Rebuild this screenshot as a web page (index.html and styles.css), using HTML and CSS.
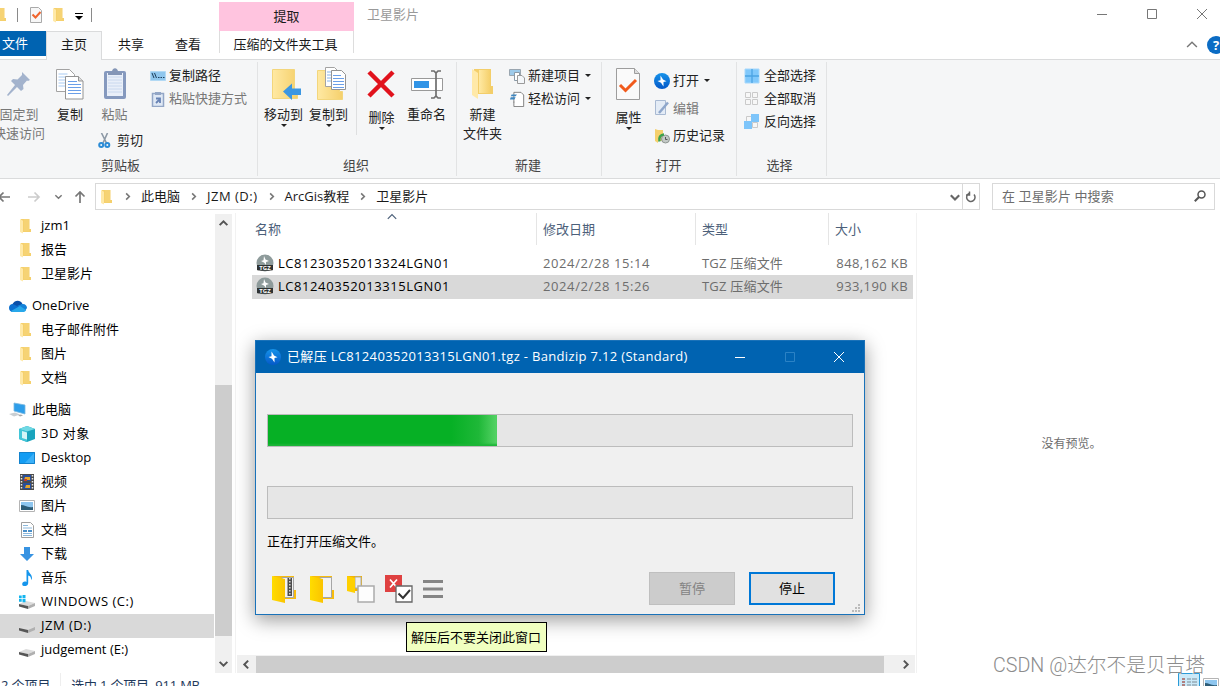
FILE: index.html
```html
<!DOCTYPE html>
<html lang="zh-CN">
<head>
    <meta charset="UTF-8">
    <title>卫星影片</title>
    <link rel="stylesheet" href="styles.css">
</head>
<body>
    <!-- 图标 -->
    <svg class="icon-defs" width="0" height="0">
        <defs>
            <linearGradient id="g-folder" x1="0" x2="1"><stop offset="0" stop-color="#ffe9a3"/><stop offset="1" stop-color="#f5d06c"/></linearGradient>
            <linearGradient id="g-blue" x1="0" y1="0" x2="0" y2="1"><stop offset="0" stop-color="#1693ea"/><stop offset="1" stop-color="#0458c8"/></linearGradient>
            <linearGradient id="g-yellow" x1="0" x2="1"><stop offset="0" stop-color="#ffdc00"/><stop offset="1" stop-color="#fbc400"/></linearGradient>
        </defs>
        <symbol id="i-folder" viewBox="0 0 16 16">
            <path d="M2 1h8.500v10H12v3H2z" fill="#f5d06c"/>
            <path d="M1 1l3 1.800V15.500L1 14z" fill="#ffe9a8"/>
            <path d="M5 1h5v12H5z" fill="#f6d374"/>
        </symbol>
        <symbol id="i-check" viewBox="0 0 16 16">
            <path d="M2.500.500h8l3 3v12h-11z" fill="#f7f7f7" stroke="#a9a9a9"/>
            <path d="M4.500 7.500l3 3 5-5.500" fill="none" stroke="#f0642c" stroke-width="2"/>
        </symbol>
        <symbol id="i-pin" viewBox="0 0 24 24">
            <path d="M15 0l8 8-2 1-1-.5-4 4.500.5 4-2.500 2-4-4L1 24l-1-1 8-10-4-4 2-2 4.500.5L15 3z" fill="#a3b3cd"/>
        </symbol>
        <symbol id="i-copy" viewBox="0 0 28 32">
            <path d="M.5 1.500h13l5 5v17H.5z" fill="#fff" stroke="#a3a3a3"/>
            <path d="M2.500 6h9M2.500 9h12M2.500 12h12M2.500 15h12M2.500 18h12" stroke="#a9cbf2"/>
            <path d="M9.500 8.500h13l4.500 4.500v18H9.500z" fill="#fff" stroke="#939393"/>
            <path d="M22.500 8.500V13H27" fill="#ddd" stroke="#939393"/>
            <path d="M12 13.500h9M12 16.500h13M12 19.500h13M12 22.500h13M12 25.500h13" stroke="#6b9fe8"/>
        </symbol>
        <symbol id="i-paste" viewBox="0 0 24 32">
            <rect x="1" y="3" width="22" height="28" rx="2" fill="#8599be"/>
            <path d="M4 5h16v23H4z" fill="#e9eff9"/>
            <path d="M5 9h14M5 12h14M5 15h14M5 18h14M5 21h14M5 24h14" stroke="#c9d8ee"/>
            <path d="M5 7V4h4c0-5 6-5 6 0h4v3z" fill="#8496b7"/>
        </symbol>
        <symbol id="i-path" viewBox="0 0 16 16">
            <path d="M.5 3.500h15v9H.5z" fill="#8fc6ed" stroke="#b2d9f4"/>
            <path d="M2 5l2 5M4.500 5l2 5M8 9.500h1.500M10.500 9.500H12M13 9.500h1.500" stroke="#20415d" fill="none"/>
        </symbol>
        <symbol id="i-shortcut" viewBox="0 0 16 16">
            <path d="M2.500 2.500h11v13h-11z" fill="#dfe8f5" stroke="#93a6c6" stroke-width="1.500"/>
            <path d="M5 1h6v3H5z" fill="#93a6c6"/>
            <path d="M6 12l3-3M6 7.500h4V12" stroke="#6782b4" stroke-width="1.800" fill="none"/>
        </symbol>
        <symbol id="i-cut" viewBox="0 0 16 16">
            <path d="M3.500 0l5 10M9.500 0L5 10" stroke="#8d99a6" stroke-width="1.600"/>
            <circle cx="3.200" cy="12" r="2" fill="none" stroke="#2a8bd6" stroke-width="2"/>
            <circle cx="9.300" cy="12" r="2" fill="none" stroke="#2a8bd6" stroke-width="2"/>
        </symbol>
        <symbol id="i-bigfolder" viewBox="0 0 32 32">
            <path d="M3.500 1.500h22v21h3v8h-25z" fill="url(#g-folder)" stroke="#f3d67c"/>
        </symbol>
        <symbol id="i-moveto" viewBox="0 0 32 32">
            <use href="#i-bigfolder"/>
            <path d="M14 23.500l9-8v5h9v6.500h-9v5z" fill="#3c97e2"/>
        </symbol>
        <symbol id="i-copyto" viewBox="0 0 32 34">
            <use href="#i-bigfolder" y="2" width="32" height="32"/>
            <path d="M11.500.500h9l3 3v16h-12z" fill="#fff" stroke="#a3a3a3"/>
            <path d="M13 5h6M13 8h6M13 11h6M13 14h6" stroke="#86b4ec"/>
            <path d="M17.500 3.500h10l4 4v15h-14z" fill="#fff" stroke="#939393"/>
            <path d="M19 8.500h8M19 11.500h11M19 14.500h11M19 17.500h11M19 20.500h11" stroke="#6b9fe8"/>
        </symbol>
        <symbol id="i-delete" viewBox="0 0 28 28">
            <path d="M2 2l24 24M26 2L2 26" stroke="#e1121c" stroke-width="4.500"/>
        </symbol>
        <symbol id="i-rename" viewBox="0 0 32 32">
            <path d="M.5 10.500h31v12H.5z" fill="#fff" stroke="#999"/>
            <path d="M3 13h15v7H3z" fill="#3194e6"/>
            <path d="M20 3h3l2 2 2-2h3M20 30h3l2-2 2 2h3M25 4.500v24" fill="none" stroke="#6e6e6e" stroke-width="1.700"/>
        </symbol>
        <symbol id="i-newfolder" viewBox="0 0 24 32">
            <path d="M3 1h17v17h2v8H3z" fill="#f3ce6a"/>
            <path d="M8 2h11v23H8z" fill="url(#g-folder)"/>
            <path d="M1 1l6 4v26l-6-4z" fill="#ffe9a8"/>
        </symbol>
        <symbol id="i-newitem" viewBox="0 0 16 16">
            <path d="M.5 1.500h11v6H.5z" fill="#9dcaea" stroke="#9aa6b0"/>
            <path d="M5.500 4.500h5v8h-5z" fill="#fff" stroke="#8a9aa8"/>
            <path d="M8.500 7.500H13l2.500 2.500v5.500h-7z" fill="#f4f7fa" stroke="#9a9a9a"/>
        </symbol>
        <symbol id="i-access" viewBox="0 0 16 18">
            <path d="M4.500 1.500h8l3 3v13h-11V12" fill="#fff" stroke="#777"/>
            <path d="M4.500 1.500V13" stroke="#777"/>
            <path d="M2 4h6L6.500 6H1zM1 7h5.500L5 9.500H0z" fill="#3f87c0"/>
        </symbol>
        <symbol id="i-props" viewBox="0 0 24 32">
            <path d="M.5.500h18l5 5v26H.5z" fill="#fafafa" stroke="#9d9d9d"/>
            <path d="M18.500.500v5h5" fill="#ddd" stroke="#9d9d9d"/>
            <path d="M4 17l5.500 5.500L20 12" fill="none" stroke="#f15a1c" stroke-width="3"/>
        </symbol>
        <symbol id="i-bandi" viewBox="0 0 16 16">
            <circle cx="8" cy="8" r="8" fill="url(#g-blue)"/>
            <path d="M6.500 2.500l2.500 4 3.500 1.700-3 .8v4.500L7 9.800 3.500 8l3-.8z" fill="#fff"/>
        </symbol>
        <symbol id="i-edit" viewBox="0 0 16 16">
            <path d="M1.500.500h10v14h-10z" fill="#e4ecf6" stroke="#a9bad3"/>
            <path d="M5 13L14 2.500" stroke="#8fa7cb" stroke-width="2.500"/>
        </symbol>
        <symbol id="i-history" viewBox="0 0 16 16">
            <path d="M1 1l3 1h5v11H4v2l-3-2z" fill="#f5d06c"/>
            <circle cx="11.500" cy="11" r="4" fill="#c3c9c6" stroke="#8e9692"/>
            <path d="M11.500 9v2.500h2" stroke="#555" fill="none"/>
            <path d="M5.500 13.500c-1-4 1-7 4.500-7" stroke="#3ca24d" stroke-width="2.500" fill="none"/>
        </symbol>
        <symbol id="i-selall" viewBox="0 0 16 16">
            <path d="M1 1h14v14H1z" fill="#80c8fb" stroke="#a6d8fc"/>
            <path d="M8 1v14M1 8h14" stroke="#4ba4e4" stroke-width="1.300"/>
        </symbol>
        <symbol id="i-selnone" viewBox="0 0 16 16">
            <path d="M1.500 1.500h5v5h-5zM8.500 1.500h5v5h-5zM1.500 8.500h5v5h-5zM8.500 8.500h5v5h-5z" fill="#f7f7f7" stroke="#cacaca"/>
        </symbol>
        <symbol id="i-selinv" viewBox="0 0 16 16">
            <path d="M2.500 2.500h5v5h-5zM8.500 8.500h5v5h-5z" fill="#f7f7f7" stroke="#cacaca"/>
            <path d="M7 0h8v8H7zM0 7h8v8H0z" fill="#7ec5fa"/>
        </symbol>
        <symbol id="i-onedrive" viewBox="0 0 18 12">
            <path d="M3 5C5 0 11-1 13.500 4L9 8z" fill="#0a4fa8"/>
            <path d="M13 4c3-.5 5 1.500 5 4l-2 3-8-5z" fill="#1481d8"/>
            <path d="M4 4C1 4 0 6 0 8s1.500 4 4 4l6-5z" fill="#0b6fd0"/>
            <path d="M2 11l9-5 6 4c-.5 1.500-1.500 2-3 2H4c-1 0-1.500-.5-2-1z" fill="#28a8ea"/>
        </symbol>
        <symbol id="i-pc" viewBox="0 0 18 16">
            <path d="M5 1l11 2v9L5 9z" fill="#2e9eea" stroke="#79b8df" stroke-width=".8"/>
            <path d="M0 12l6-1.500 5 2-6 2z" fill="#c9ced2"/>
            <path d="M9 13l3-.5 2 1-3 1z" fill="#aaa"/>
        </symbol>
        <symbol id="i-3d" viewBox="0 0 16 16">
            <path d="M8 0l8 3v10l-8 3-8-3V3z" fill="#19a4bd"/>
            <path d="M8 0l8 3-8 2.500L0 3z" fill="#70d9e4"/>
            <path d="M0 3l8 2.500V16l-8-3z" fill="#42c6d8"/>
            <path d="M3 5l5 1.500v7L3 12z" fill="#d4f5f7"/>
        </symbol>
        <symbol id="i-desktop" viewBox="0 0 16 16">
            <path d="M0 2h16v12H0z" fill="#149df3"/>
            <path d="M16 2v12H5z" fill="#3ab0f8"/>
            <path d="M.5 2.500h15v11H.5z" fill="none" stroke="#1382cc"/>
        </symbol>
        <symbol id="i-video" viewBox="0 0 16 16">
            <path d="M1 0h14v16H1z" fill="#4b4b4b"/>
            <path d="M2.500 1v15M13.500 1v15" stroke="#e8e8e8" stroke-width="1.500" stroke-dasharray="1.500 1.500"/>
            <path d="M4 1h8v6H4zM4 9h8v6H4z" fill="#274f9d"/>
            <path d="M6 3h5v3H5zM7 11h4v3H6z" fill="#e4a52a"/>
            <path d="M5 5h3v2H5z" fill="#c43a30"/>
        </symbol>
        <symbol id="i-pic" viewBox="0 0 16 16">
            <path d="M.5 2.500h15v11H.5z" fill="#fff" stroke="#b4b4b4"/>
            <path d="M2 4h12v8H2z" fill="#8ec6ef"/>
            <path d="M2 7c4 0 6 3 12 2v3H2z" fill="#2d5c76"/>
        </symbol>
        <symbol id="i-doc" viewBox="0 0 16 16">
            <path d="M2.500.500h9l3 3v12h-12z" fill="#fff" stroke="#9f9f9f"/>
            <path d="M4 3.500h5M4 6h9M4 11.500h9M4 13.500h9" stroke="#8bb8dc"/>
            <path d="M4 8h4v2H4zM9 8h4v2H9z" fill="#4a8fc8"/>
        </symbol>
        <symbol id="i-down" viewBox="0 0 16 16">
            <path d="M5 1h6v7h4l-7 7-7-7h4z" fill="#3793e2"/>
        </symbol>
        <symbol id="i-music" viewBox="0 0 16 16">
            <path d="M7.500 0h1.700c.3 3 3.800 4 3.800 8-.2 1-.5 1.500-1 2 .3-3-1-4-2.800-4.500V13c0 4-6 4-6 1.200C3.200 12 5.500 11 7.500 12z" fill="#1595ec"/>
        </symbol>
        <symbol id="i-drive" viewBox="0 0 16 16">
            <path d="M0 10l7-3 9 2-7 3z" fill="#dcdcdc"/>
            <path d="M0 10l9 2v3l-9-2.500z" fill="#565656"/>
            <path d="M9 12l7-3v3l-7 3z" fill="#b0b0b0"/>
        </symbol>
        <symbol id="i-windrive" viewBox="0 0 16 16">
            <use href="#i-drive"/>
            <path d="M0 1.500h2.700v2.700H0zM3.500 1H6.500v3.200h-3zM0 5h2.700v2.700H0zM3.500 5h3v3.200h-3z" fill="#13b5ef"/>
        </symbol>
        <symbol id="i-tgz" viewBox="0 0 18 18">
            <circle cx="9" cy="9" r="8.500" fill="#8e9b9b"/>
            <path d="M8 2l1.500 3.500L13 7l-3 1v3L8 8.500 5 7l2.500-.8z" fill="#fff"/>
            <path d="M1 11h16v5c-1 1-15 1-16 0z" fill="#2f3333"/>
        </symbol>
        <symbol id="i-openfolder" viewBox="0 0 24 28">
            <path d="M1 1h21v14h2v9H11z" fill="#f8bc0c"/>
            <path d="M10 2.500h11.500v20H10z" fill="#f3f3f3" stroke="#a6a6a6"/>
            <path d="M0 1l13 3v24L0 25z" fill="url(#g-yellow)"/>
        </symbol>
        <symbol id="i-zipfolder" viewBox="0 0 24 28">
            <use href="#i-openfolder" width="24" height="28"/>
            <path d="M15.500 3h4.500v18h-4.500z" fill="#4d4d4d"/>
            <path d="M17.800 3v17" stroke="#ddd" stroke-width="1.500" stroke-dasharray="1.500 1.500"/>
        </symbol>
        <symbol id="i-foldercheck" viewBox="0 0 28 28">
            <path d="M0 1h15v10h1v5H0z" fill="#f4b400"/>
            <path d="M8 2h6v11H8z" fill="#eee" stroke="#aaa"/>
            <path d="M0 1l8 2v15l-8-2z" fill="#ffd000"/>
            <path d="M11 11h16v16H11z" fill="#fdfdfd" stroke="#aaa" stroke-width="1.500"/>
        </symbol>
        <symbol id="i-closecheck" viewBox="0 0 28 28">
            <path d="M0 0h17v17H0z" fill="#df4141"/>
            <path d="M5 4.500l7 8M12 4.500l-7 8" stroke="#fff" stroke-width="1.700"/>
            <path d="M11 11h16v16H11z" fill="#fff" stroke="#666" stroke-width="1.300"/>
            <path d="M13.500 18.500l4.500 4.500 7-8" fill="none" stroke="#333" stroke-width="2"/>
        </symbol>
        <symbol id="i-chev" viewBox="0 0 10 10">
            <path d="M1.500 3.500L5 7l3.500-3.500" fill="none" stroke="currentColor"/>
        </symbol>
        <symbol id="i-arrow" viewBox="0 0 14 12">
            <path d="M13 6H2M6.500 1.500L2 6l4.500 4.500" fill="none" stroke="currentColor" stroke-width="1.700"/>
        </symbol>
    </svg>

    <div class="explorer">
        <!-- 标题栏 -->
        <div class="titlebar">
            <div class="quick">
                <svg class="q-folder"><use href="#i-folder"/></svg>
                <i class="q-sep"></i>
                <svg class="q-check"><use href="#i-check"/></svg>
                <svg class="q-folder2"><use href="#i-folder"/></svg>
                <svg class="q-more" viewBox="0 0 8 7"><path d="M0 .5h8" stroke="#000"/><path d="M0 3h8L4 7z"/></svg>
                <i class="q-sep"></i>
            </div>
            <div class="context-tab">提取</div>
            <div class="win-title">卫星影片</div>
            <div class="win-buttons">
                <svg viewBox="0 0 12 12"><path d="M1 6.500h10"/></svg>
                <svg viewBox="0 0 12 12"><path d="M1.500 1.500h9v9h-9z"/></svg>
                <svg viewBox="0 0 12 12"><path d="M1 1l10 10M11 1L1 11"/></svg>
            </div>
        </div>

        <div class="tabs">
            <div class="tab tab-file">文件</div>
            <div class="tab tab-home">主页</div>
            <div class="tab tab-share">共享</div>
            <div class="tab tab-view">查看</div>
            <div class="tab tab-tools">压缩的文件夹工具</div>
            <div class="tab-right">
                <svg class="collapse"><use href="#i-chev"/></svg>
                <span class="help">?</span>
            </div>
        </div>

        <!-- 功能区 -->
        <div class="ribbon">
            <div class="group g-clip">
                <div class="group-body">
                    <div class="big pin disabled"><div class="pic"><svg width="24" height="24"><use href="#i-pin"/></svg></div>固定到<br>快速访问</div>
                    <div class="big copy"><div class="pic"><svg width="28" height="32"><use href="#i-copy"/></svg></div>复制</div>
                    <div class="paste-col">
                        <div class="big disabled"><div class="pic"><svg width="24" height="32"><use href="#i-paste"/></svg></div>粘贴</div>
                        <div class="small cut"><svg><use href="#i-cut"/></svg>剪切</div>
                    </div>
                    <div class="col">
                        <div class="small"><svg><use href="#i-path"/></svg>复制路径</div>
                        <div class="small disabled"><svg><use href="#i-shortcut"/></svg>粘贴快捷方式</div>
                    </div>
                </div>
                <div class="group-name">剪贴板</div>
            </div>
            <div class="group g-org">
                <div class="group-body">
                    <div class="big"><div class="pic shift"><svg width="32" height="32"><use href="#i-moveto"/></svg></div>移动到<i class="drop"></i></div>
                    <div class="big"><div class="pic shift"><svg width="32" height="34"><use href="#i-copyto"/></svg></div>复制到<i class="drop"></i></div>
                    <i class="inner-sep"></i>
                    <div class="big low"><div class="pic"><svg width="28" height="28"><use href="#i-delete"/></svg></div>删除<i class="drop"></i></div>
                    <div class="big"><div class="pic"><svg width="32" height="32"><use href="#i-rename"/></svg></div>重命名</div>
                </div>
                <div class="group-name">组织</div>
            </div>
            <div class="group g-new">
                <div class="group-body">
                    <div class="big"><div class="pic"><svg width="24" height="32"><use href="#i-newfolder"/></svg></div>新建<br>文件夹</div>
                    <div class="col">
                        <div class="small"><svg><use href="#i-newitem"/></svg>新建项目<i class="drop"></i></div>
                        <div class="small"><svg><use href="#i-access"/></svg>轻松访问<i class="drop"></i></div>
                    </div>
                </div>
                <div class="group-name">新建</div>
            </div>
            <div class="group g-open">
                <div class="group-body">
                    <div class="big low"><div class="pic"><svg width="24" height="32"><use href="#i-props"/></svg></div>属性<i class="drop"></i></div>
                    <div class="col">
                        <div class="small"><svg><use href="#i-bandi"/></svg>打开<i class="drop"></i></div>
                        <div class="small disabled"><svg><use href="#i-edit"/></svg>编辑</div>
                        <div class="small"><svg><use href="#i-history"/></svg>历史记录</div>
                    </div>
                </div>
                <div class="group-name">打开</div>
            </div>
            <div class="group g-select">
                <div class="group-body">
                    <div class="col">
                        <div class="small"><svg><use href="#i-selall"/></svg>全部选择</div>
                        <div class="small"><svg><use href="#i-selnone"/></svg>全部取消</div>
                        <div class="small"><svg><use href="#i-selinv"/></svg>反向选择</div>
                    </div>
                </div>
                <div class="group-name">选择</div>
            </div>
        </div>

        <!-- 地址栏 -->
        <div class="navbar">
            <div class="nav-buttons">
                <svg class="back"><use href="#i-arrow"/></svg>
                <svg class="forward"><use href="#i-arrow"/></svg>
                <svg class="recent"><use href="#i-chev"/></svg>
                <svg class="up"><use href="#i-arrow"/></svg>
            </div>
            <div class="address">
                <svg class="addr-icon"><use href="#i-folder"/></svg>
                <svg class="crumb-sep first"><use href="#i-chev"/></svg><span>此电脑</span>
                <svg class="crumb-sep"><use href="#i-chev"/></svg><span class="latin">JZM (D:)</span>
                <svg class="crumb-sep"><use href="#i-chev"/></svg><span>ArcGis教程</span>
                <svg class="crumb-sep"><use href="#i-chev"/></svg><span>卫星影片</span>
                <svg class="addr-drop"><use href="#i-chev"/></svg>
                <div class="refresh"><svg viewBox="0 0 12 12"><path d="M4 2.500A4.200 4.200 0 1 0 9 3.500M4.500.500v3.500H1" fill="none" stroke="#666" stroke-width="1.500"/></svg></div>
            </div>
            <div class="search">在 卫星影片 中搜索
                <svg viewBox="0 0 12 12"><circle cx="7.500" cy="4.500" r="3.500" fill="none" stroke="#555" stroke-width="1.500"/><path d="M5 7L.8 11.200" stroke="#555" stroke-width="2"/></svg>
            </div>
        </div>

        <div class="main">
            <div class="tree">
                <div class="node sub"><svg><use href="#i-folder"/></svg>jzm1</div>
                <div class="node sub"><svg><use href="#i-folder"/></svg>报告</div>
                <div class="node sub"><svg><use href="#i-folder"/></svg>卫星影片</div>
                <div class="node root"><svg><use href="#i-onedrive"/></svg>OneDrive</div>
                <div class="node sub"><svg><use href="#i-folder"/></svg>电子邮件附件</div>
                <div class="node sub"><svg><use href="#i-folder"/></svg>图片</div>
                <div class="node sub"><svg><use href="#i-folder"/></svg>文档</div>
                <div class="node root"><svg><use href="#i-pc"/></svg>此电脑</div>
                <div class="node sub"><svg><use href="#i-3d"/></svg><span class="latin">3D 对象</span></div>
                <div class="node sub"><svg><use href="#i-desktop"/></svg>Desktop</div>
                <div class="node sub"><svg><use href="#i-video"/></svg>视频</div>
                <div class="node sub"><svg><use href="#i-pic"/></svg>图片</div>
                <div class="node sub"><svg><use href="#i-doc"/></svg>文档</div>
                <div class="node sub"><svg><use href="#i-down"/></svg>下载</div>
                <div class="node sub"><svg><use href="#i-music"/></svg>音乐</div>
                <div class="node sub"><svg><use href="#i-windrive"/></svg><span class="latin">WINDOWS (C:)</span></div>
                <div class="node sub active"><svg><use href="#i-drive"/></svg><span class="latin">JZM (D:)</span></div>
                <div class="node sub"><svg><use href="#i-drive"/></svg>judgement (E:)</div>
            </div>
            <div class="vscroll">
                <svg class="up"><use href="#i-chev"/></svg>
                <div class="thumb"></div>
                <svg><use href="#i-chev"/></svg>
            </div>
            <div class="files">
                <div class="file-head">
                    <div class="c-name">名称<svg class="sort"><use href="#i-chev"/></svg></div>
                    <div class="c-date">修改日期</div>
                    <div class="c-type">类型</div>
                    <div class="c-size">大小</div>
                </div>
                <div class="file">
                    <div class="c-name"><span class="tgz"><svg><use href="#i-tgz"/></svg><b>TGZ</b></span>LC81230352013324LGN01</div>
                    <div class="c-date">2024/2/28 15:14</div>
                    <div class="c-type">TGZ 压缩文件</div>
                    <div class="c-size">848,162 KB</div>
                </div>
                <div class="file selected">
                    <div class="c-name"><span class="tgz"><svg><use href="#i-tgz"/></svg><b>TGZ</b></span>LC81240352013315LGN01</div>
                    <div class="c-date">2024/2/28 15:26</div>
                    <div class="c-type">TGZ 压缩文件</div>
                    <div class="c-size">933,190 KB</div>
                </div>
                <div class="hscroll">
                    <svg class="left"><use href="#i-chev"/></svg>
                    <div class="thumb"></div>
                    <svg class="right"><use href="#i-chev"/></svg>
                </div>
            </div>
            <div class="preview">没有预览。</div>
        </div>

        <div class="status">
            <span>2 个项目</span>
            <span class="chosen">选中 1 个项目&nbsp; 911 MB</span>
            <div class="views">
                <svg class="view-list" viewBox="0 0 22 22"><path d="M.5.500h21v21H.5z" fill="#cbe9f8" stroke="#2a9bd8"/><path d="M4 6h3M4 9h3M4 12h3" stroke="#b08080" stroke-width="2"/><path d="M9 6h4M14 6h5M9 9h4M14 9h5M9 12h4M14 12h5" stroke="#7d8b94"/></svg>
                <svg class="view-pic"><use href="#i-pic"/></svg>
            </div>
        </div>
    </div>

    <!-- 解压窗口 -->
    <div class="dialog">
        <div class="dialog-title">
            <svg class="app"><use href="#i-bandi"/></svg>
            <span>已解压 LC81240352013315LGN01.tgz - Bandizip 7.12 (Standard)</span>
            <div class="dialog-buttons">
                <svg viewBox="0 0 12 12"><path d="M1 6.500h10"/></svg>
                <svg class="off" viewBox="0 0 12 12"><path d="M1.500 1.500h9v9h-9z"/></svg>
                <svg viewBox="0 0 12 12"><path d="M1 1l10 10M11 1L1 11"/></svg>
            </div>
        </div>
        <div class="dialog-body">
            <div class="bar"><div class="fill" style="width: 229px"></div></div>
            <div class="bar"></div>
            <p>正在打开压缩文件。</p>
            <div class="dialog-foot">
                <svg width="24" height="28"><use href="#i-zipfolder"/></svg>
                <svg width="24" height="28"><use href="#i-openfolder"/></svg>
                <svg width="28" height="28"><use href="#i-foldercheck"/></svg>
                <svg width="28" height="28"><use href="#i-closecheck"/></svg>
                <svg class="menu" width="20" height="20" viewBox="0 0 20 20"><path d="M0 2.500h20M0 10h20M0 17.500h20" stroke="#858585" stroke-width="3"/></svg>
                <button class="btn" disabled>暂停</button>
                <button class="btn primary">停止</button>
            </div>
        </div>
        <svg class="grip" viewBox="0 0 8 8"><path d="M6 0h2v2H6zM3 3h2v2H3zM6 3h2v2H6zM0 6h2v2H0zM3 6h2v2H3zM6 6h2v2H6z" fill="#bbb"/></svg>
    </div>
    <div class="tip">解压后不要关闭此窗口</div>
    <div class="watermark">CSDN @达尔不是贝吉塔</div>
</body>
</html>
```
FILE: styles.css
```css
* {
    margin: 0;
    padding: 0;
    box-sizing: border-box;
}

body {
    width: 1220px;
    height: 686px;
    overflow: hidden;
    position: relative;
    background: #fff;
    color: #1a1a1a;
    font: 13px/19px "Open Sans", "Noto Sans CJK SC", sans-serif;
    white-space: nowrap;
}

svg {
    display: block;
    flex: none;
}

.icon-defs {
    position: absolute;
}

.latin {
    letter-spacing: .5px;
}

.explorer {
    height: 686px;
    display: flex;
    flex-direction: column;
    overflow: hidden;
}

/* 标题栏 */
.titlebar {
    display: flex;
    height: 31px;
    flex: none;
}

.quick {
    width: 219px;
    height: 29px;
    display: flex;
    align-items: center;
}

.quick svg {
    width: 16px;
    height: 16px;
}

.quick .q-folder {
    margin-left: -6px;
}

.q-sep {
    width: 1px;
    height: 14px;
    background: #8a8a8a;
    margin-left: 7px;
}

.quick .q-check {
    margin-left: 10px;
}

.quick .q-folder2 {
    margin-left: 8px;
}

.quick .q-more {
    width: 8px;
    height: 7px;
    margin: 3px 1px 0 7px;
}

.context-tab {
    width: 135px;
    height: 29px;
    margin-top: 2px;
    background: #ffc4df;
    text-align: center;
    line-height: 28px;
}

.win-title {
    margin-left: 13px;
    line-height: 29px;
    color: #999;
}

.win-buttons {
    margin-left: auto;
    display: flex;
    gap: 38px;
    padding: 8px 12px 0 0;
}

.win-buttons svg {
    width: 12px;
    height: 12px;
    fill: none;
    stroke: #777;
}

/* 选项卡 */
.tabs {
    display: flex;
    height: 29px;
    flex: none;
    border-bottom: 1px solid #dadbdc;
    line-height: 26px;
    text-align: center;
}

.tab-file {
    width: 46px;
    height: 25px;
    padding-right: 16px;
    line-height: 25px;
    background: #0063b1;
    color: #fff;
}

.tab-home {
    width: 56px;
    height: 29px;
    border: 1px solid #dadbdc;
    border-bottom: 0;
    background: #f5f6f7;
    line-height: 25px;
}

.tab-share {
    width: 58px;
}

.tab-view {
    width: 56px;
}

.tab-tools {
    width: 135px;
    height: 22px;
    margin-left: 3px;
    padding-right: 2px;
    border-left: 1px solid #ddd;
    border-right: 1px solid #ddd;
}

.tab-right {
    margin-left: auto;
    display: flex;
    align-items: center;
    color: #777;
}

.collapse {
    width: 14px;
    height: 14px;
    transform: rotate(180deg);
    margin-right: 8px;
}

.help {
    width: 18px;
    height: 18px;
    margin-right: -5px;
    border-radius: 50%;
    background: #0b6cc4;
    color: #fff;
    font-weight: bold;
    line-height: 18px;
}

/* 功能区 */
.ribbon {
    display: flex;
    height: 119px;
    flex: none;
    background: #f5f6f7;
    border-bottom: 1px solid #dadbdc;
}

.group {
    height: 114px;
    margin-top: 2px;
    border-right: 1px solid #e2e3e4;
    display: flex;
    flex-direction: column;
}

.g-clip {
    width: 274px;
    margin-left: -16px;
    padding-left: 8px;
}

.g-org {
    width: 199px;
    padding-left: 3px;
}

.g-new {
    width: 145px;
    padding-left: 3px;
}

.g-open {
    width: 135px;
    padding-left: 4px;
}

.g-select {
    width: 90px;
    padding-left: 7px;
}

.group-body {
    display: flex;
    height: 94px;
}

.group-name {
    padding-right: 5px;
    text-align: center;
    color: #444;
    line-height: 18px;
}

.g-clip .group-name {
    padding-right: 8px;
}

.g-select .group-name {
    padding-right: 11px;
}

.big {
    width: 45px;
    display: flex;
    flex-direction: column;
    align-items: center;
    text-align: center;
    color: #222;
}

.big .pic {
    height: 43px;
    padding-top: 1px;
    display: flex;
    align-items: center;
    flex: none;
}

.big .pic.shift {
    padding-left: 3px;
}

.big.low .pic {
    height: 46px;
    padding: 0 2px 2px 0;
}

.big.pin {
    display: block;
    width: 54px;
}

.pin .pic {
    justify-content: center;
}

.big.copy {
    width: 46px;
    margin-left: 1px;
}

.paste-col {
    width: 57px;
}

.paste-col .big {
    width: 43px;
}

.cut {
    margin: 5px 0 0 5px;
}

.drop {
    border: 3px solid transparent;
    border-top-color: #222;
    border-bottom: 0;
}

.big .drop {
    margin-top: 0;
}

.inner-sep {
    width: 1px;
    height: 55px;
    margin: 18px 2px 0 5px;
    background: #dedfe0;
}

.col {
    padding-top: 2px;
}

.small {
    display: flex;
    align-items: center;
    height: 23px;
    color: #222;
}

.small svg {
    width: 16px;
    height: 16px;
    margin-right: 3px;
}

.g-select .small svg {
    margin-right: 4px;
}

.small .drop {
    margin-left: 5px;
}

.disabled {
    color: #787878;
}

.g-new .col {
    padding-left: 4px;
}

.g-open .col {
    padding: 5px 0 0 3px;
}

.g-open .small {
    height: 27.5px;
}

/* 地址栏 */
.navbar {
    display: flex;
    height: 34px;
    padding: 4px 5px 3px 0;
    flex: none;
}

.nav-buttons {
    width: 95px;
    display: flex;
    align-items: center;
    color: #777;
}

.nav-buttons svg {
    width: 14px;
    height: 12px;
}

.nav-buttons .back {
    margin-left: -3px;
}

.nav-buttons .forward {
    margin-left: 16px;
    transform: rotate(180deg);
    color: #ccc;
}

.nav-buttons .recent {
    width: 9px;
    height: 9px;
    margin-left: 13px;
    stroke-width: 1.6;
}

.nav-buttons .up {
    margin-left: 10px;
    transform: rotate(90deg);
}

.address {
    width: 885px;
    border: 1px solid #d9d9d9;
    display: flex;
    align-items: center;
}

.address span {
    margin-top: -1px;
}

.addr-icon {
    width: 16px;
    height: 16px;
    margin-left: 4px;
}

.crumb-sep {
    width: 9px;
    height: 9px;
    margin: 0 9px 0 9px;
    transform: rotate(-90deg);
    color: #777;
    stroke-width: 1.8;
}

.crumb-sep.first {
    margin-left: 7px;
}

.addr-drop {
    width: 12px;
    height: 12px;
    margin: 0 1px 0 auto;
    color: #666;
    stroke-width: 1.8;
}

.refresh {
    width: 17px;
    height: 25px;
    border-left: 1px solid #d9d9d9;
    display: flex;
    align-items: center;
    justify-content: center;
}

.refresh svg {
    width: 12px;
    height: 12px;
}

.search {
    width: 223px;
    margin-left: 12px;
    padding: 0 8px 1px 9px;
    border: 1px solid #d9d9d9;
    display: flex;
    align-items: center;
    justify-content: space-between;
    color: #6d6d6d;
    letter-spacing: .1px;
}

.search svg {
    width: 12px;
    height: 12px;
}

.main {
    display: flex;
    height: 460px;
    flex: none;
}

/* 导航窗格 */
.tree {
    width: 215px;
    padding-top: 1px;
    color: #000;
}

.node {
    display: flex;
    align-items: center;
    width: 214px;
    height: 24px;
    padding: 0 0 1px 19px;
}

.node svg {
    width: 16px;
    height: 16px;
    margin-right: 6px;
}

.node.root {
    margin-top: 8px;
    padding-left: 9px;
}

.node.root svg {
    width: 18px;
    margin-right: 5px;
}

.node.active {
    background: #d9d9d9;
}

.vscroll {
    width: 17px;
    height: 459px;
    margin-top: 1px;
    background: #f0f0f0;
    display: flex;
    flex-direction: column;
    align-items: center;
    padding: 4px 0;
    color: #555;
}

.vscroll svg,
.hscroll svg {
    width: 11px;
    height: 11px;
    stroke-width: 1.8;
}

.vscroll .up {
    transform: rotate(180deg);
}

.vscroll .thumb {
    width: 17px;
    height: 251px;
    margin: 156px 0 22px;
    background: #cdcdcd;
    flex: none;
}

/* 文件列表 */
.files {
    width: 682px;
    margin-left: 3px;
    padding-left: 17px;
    border-left: 1px solid #f2f2f2;
    border-right: 1px solid #f2f2f2;
    display: flex;
    flex-direction: column;
}

.file-head {
    display: flex;
    height: 32px;
    margin: 0 0 7px -1px;
    color: #4c607a;
    line-height: 33px;
}

.file-head .c-name,
.file-head .c-date,
.file-head .c-type {
    border-right: 1px solid #e5e5e5;
}

.c-name {
    width: 285px;
    padding-left: 3px;
    display: flex;
}

.sort {
    width: 12px;
    height: 12px;
    margin: -2px 0 0 105px;
    transform: rotate(180deg);
}

.c-date {
    width: 159px;
    padding-left: 6px;
}

.c-type {
    width: 133px;
    padding-left: 6px;
}

.c-size {
    padding-left: 6px;
}

.file {
    display: flex;
    width: 661px;
    height: 23px;
    line-height: 23px;
    margin-left: -1px;
    color: #6d6d6d;
}

.file .c-name {
    color: #000;
    padding-left: 4px;
    letter-spacing: .57px;
}

.file .c-date {
    letter-spacing: .6px;
}

.file .c-type {
    letter-spacing: .2px;
}

.file .c-size {
    width: 79px;
    padding-left: 0;
    text-align: right;
    letter-spacing: .4px;
}

.file.selected {
    height: 24px;
    background: #d9d9d9;
}

.tgz {
    position: relative;
    width: 18px;
    height: 18px;
    margin: 2px 4px 0 0;
}

.tgz svg {
    width: 18px;
    height: 18px;
}

.tgz b {
    position: absolute;
    left: 0;
    top: 11px;
    width: 18px;
    font-size: 6px;
    line-height: 6px;
    letter-spacing: 0;
    text-align: center;
    color: #fff;
}

.hscroll {
    display: flex;
    align-items: center;
    height: 18px;
    margin: auto 1px 0 -16px;
    padding: 0 4px;
    background: #f0f0f0;
    color: #555;
}

.hscroll .left {
    transform: rotate(90deg);
}

.hscroll .right {
    transform: rotate(-90deg);
    margin-left: auto;
}

.hscroll .thumb {
    width: 628px;
    height: 17px;
    margin-left: 4px;
    background: #cdcdcd;
}

.preview {
    flex: 1;
    padding-top: 221px;
    padding-left: 6px;
    text-align: center;
    font-size: 12px;
    color: #6d6d6d;
}

/* 状态栏 */
.status {
    display: flex;
    height: 24px;
    line-height: 24px;
    color: #1e395b;
    padding-left: 1px;
    letter-spacing: -.1px;
}

.chosen {
    margin-left: 10px;
    padding-left: 10px;
    border-left: 1px solid #eee;
    letter-spacing: -.2px;
}

.views {
    margin-left: auto;
    display: flex;
}

.view-list {
    width: 22px;
    height: 22px;
}

.view-pic {
    width: 16px;
    height: 16px;
    margin: 3px 1px 0 3px;
}

/* 解压窗口 */
.dialog {
    position: absolute;
    left: 255px;
    top: 340px;
    width: 610px;
    height: 275px;
    background: #f0f0f0;
    border: 1px solid #1a72b9;
    box-shadow: 0 5px 18px rgba(0, 0, 0, .4);
}

.dialog-title {
    height: 32px;
    padding: 0 19px 1px 9px;
    display: flex;
    align-items: center;
    background: #0063b1;
    color: #fff;
}

.dialog-title span {
    letter-spacing: .33px;
}

.dialog-title .app {
    width: 16px;
    height: 16px;
    margin-right: 6px;
}

.dialog-buttons {
    display: flex;
    gap: 37.5px;
    margin-left: auto;
}

.dialog-buttons svg {
    width: 12px;
    height: 12px;
    fill: none;
    stroke: #fff;
}

.dialog-buttons .off {
    stroke: #2b82c5;
}

.dialog-body {
    padding: 41px 11px 0;
}

.bar {
    height: 33px;
    margin-bottom: 39px;
    border: 1px solid #bcbcbc;
    background: #e6e6e6;
}

.bar + .bar {
    margin-bottom: 13px;
}

.fill {
    height: 31px;
    background: linear-gradient(90deg, #06b025 80%, #1fb838 92%, #56d366);
    box-shadow: inset 0 -3px 2px -1px #1db638;
}

.dialog-body p {
    color: #000;
}

.dialog-foot {
    display: flex;
    align-items: center;
    padding: 21px 18px 0 5px;
}

.dialog-foot svg {
    margin-right: 14px;
}

.dialog-foot svg:nth-child(2) {
    margin-right: 13px;
}

.dialog-foot svg:nth-child(3),
.dialog-foot svg:nth-child(4) {
    margin-right: 10px;
}

.btn {
    width: 86px;
    height: 33px;
    font: inherit;
    color: #000;
    background: #e1e1e1;
    border: 1px solid #bfbfbf;
}

.btn:disabled {
    margin-left: auto;
    background: #ccc;
    color: #838383;
}

.btn.primary {
    margin-left: 14px;
    border: 2px solid #0078d7;
}

.grip {
    position: absolute;
    right: 4px;
    bottom: 2px;
    width: 8px;
    height: 8px;
}

.tip {
    position: absolute;
    left: 406px;
    top: 622px;
    width: 141px;
    height: 30px;
    padding-right: 1px;
    border: 1px solid #000;
    background: #f0ffc0;
    color: #000;
    text-align: center;
    line-height: 29px;
}

.watermark {
    position: absolute;
    left: 993px;
    top: 654px;
    font: 300 19.7px/24px Roboto, "Noto Sans CJK SC", sans-serif;
    color: #8c8c8c;
    text-shadow: -1px 0 0 #fff;
}
```
